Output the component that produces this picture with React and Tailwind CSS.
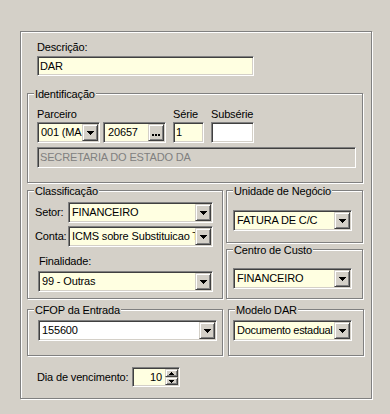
const sunken =
  "border border-t-[#808080] border-l-[#808080] border-r-white border-b-white shadow-[inset_1px_1px_0_#404040,inset_-1px_-1px_0_#d4d0c8] p-px";
const raised =
  "border border-t-[#d4d0c8] border-l-[#d4d0c8] border-r-[#404040] border-b-[#404040] shadow-[inset_1px_1px_0_#fff,inset_-1px_-1px_0_#808080] bg-[#d4d0c8]";
const etched = "border border-[#808080] shadow-[inset_1px_1px_0_#fff,1px_1px_0_#fff]";

const DownArrow = () => (
  <svg width="7" height="4" shapeRendering="crispEdges">
    <rect x="0" y="0" width="7" height="1" />
    <rect x="1" y="1" width="5" height="1" />
    <rect x="2" y="2" width="3" height="1" />
    <rect x="3" y="3" width="1" height="1" />
  </svg>
);

const SpinArrow = ({ up }) => (
  <svg width="5" height="3" shapeRendering="crispEdges">
    {up ? (
      <>
        <rect x="2" y="0" width="1" height="1" />
        <rect x="1" y="1" width="3" height="1" />
        <rect x="0" y="2" width="5" height="1" />
      </>
    ) : (
      <>
        <rect x="0" y="0" width="5" height="1" />
        <rect x="1" y="1" width="3" height="1" />
        <rect x="2" y="2" width="1" height="1" />
      </>
    )}
  </svg>
);

function Group({ title, className, children }) {
  return (
    <div className={`relative ${etched} ${className}`}>
      <span className="absolute -top-[6px] left-[6px] bg-[#d4d0c8] px-px">{title}</span>
      {children}
    </div>
  );
}

function Combo({ value, className = "", bg = "bg-[#ffffe1]", text = "pl-[2px]" }) {
  return (
    <div className={`flex h-[21px] ${sunken} ${bg} ${className}`}>
      <span className={`flex-1 overflow-hidden whitespace-nowrap leading-[17px] ${text}`}>{value}</span>
      <div className={`${raised} w-4 shrink-0 flex items-center justify-center`}>
        <DownArrow />
      </div>
    </div>
  );
}

function Edit({ value, className = "", bg = "bg-[#ffffe1]", text = "text-black pl-px", children }) {
  return (
    <div className={`flex h-[21px] ${sunken} ${bg} ${className}`}>
      <span className={`flex-1 overflow-hidden whitespace-nowrap leading-[17px] ${text}`}>{value}</span>
      {children}
    </div>
  );
}

export default function App() {
  return (
    <div className="w-[390px] h-[414px] bg-[#d4d0c8] pt-[31px] pl-5 font-['Liberation_Sans',Arial,sans-serif] text-[11px] leading-[13px] tracking-[-0.15px] text-black">
      <div className={`${etched} w-[352px] h-[368px] pl-[6px] pt-[9px]`}>
        <div className="ml-[10px]">
          <div>Descrição:</div>
          <Edit className="mt-[2px] w-[217px] !h-[20px]" value="DAR" />
        </div>

        <Group title="Identificação" className="mt-[17px] w-[336px] h-[90px] pl-[9px] pt-[14px]">
          <div className="flex">
            <div>
              <div>Parceiro</div>
              <div className="flex gap-[3px] mt-px">
                <Combo className="w-[63px]" value="001 (MA" />
                <Edit className="w-[63px]" value="20657" text="pl-[3px]">
                  <div className={`${raised} w-4 shrink-0 flex items-end justify-center gap-px pb-[4px]`}>
                    <span className="w-[2px] h-[2px] bg-black" />
                    <span className="w-[2px] h-[2px] bg-black" />
                    <span className="w-[2px] h-[2px] bg-black" />
                  </div>
                </Edit>
              </div>
            </div>
            <div className="ml-[7px]">
              <div>Série</div>
              <Edit className="mt-px w-[31px]" value="1" />
            </div>
            <div className="ml-[7px]">
              <div>Subsérie</div>
              <Edit className="mt-px w-[43px]" bg="bg-white" />
            </div>
          </div>
          <Edit
            className="mt-[4px] w-[319px]"
            bg="bg-[#d4d0c8]"
            text="text-[#808080] pl-px"
            value="SECRETARIA DO ESTADO DA"
          />
        </Group>

        <div className="flex gap-[3px] mt-[7px]">
          <Group title="Classificação" className="w-[196px] h-[109px] pl-[7px] pt-[11px]">
            <div className="flex items-center">
              <span className="w-[33px]">Setor:</span>
              <Combo className="w-[145px]" value="FINANCEIRO" />
            </div>
            <div className="flex items-center mt-[3px]">
              <span className="w-[33px]">Conta:</span>
              <Combo className="w-[145px]" value="ICMS sobre Substituicao T" />
            </div>
            <div className="ml-[3px] mt-[8px]">
              <div className="pl-px">Finalidade:</div>
              <Combo className="mt-[3px] w-[175px]" value="99 - Outras" />
            </div>
          </Group>
          <div className="flex flex-col">
            <Group title="Unidade de Negócio" className="w-[137px] h-[53px] pl-[6px] pt-[19px]">
              <Combo className="w-[119px]" value="FATURA DE C/C" />
            </Group>
            <Group title="Centro de Custo" className="mt-[6px] w-[137px] h-[50px] pl-[6px] pt-[18px]">
              <Combo className="w-[119px]" value="FINANCEIRO" />
            </Group>
          </div>
        </div>

        <div className="flex gap-[5px] mt-[10px]">
          <Group title="CFOP da Entrada" className="w-[196px] h-[47px] pl-[10px] pt-[10px]">
            <Combo className="w-[179px]" bg="bg-white" value="155600" />
          </Group>
          <Group title="Modelo DAR" className="w-[136px] h-[47px] pl-[4px] pt-[10px]">
            <Combo
              className="w-[119px]"
              text="pl-[2px] tracking-[-0.3px]"
              value="Documento estadual"
            />
          </Group>
        </div>

        <div className="flex items-center ml-[10px] mt-[11px]">
          <span className="w-[95px]">Dia de vencimento:</span>
          <div className={`flex w-[48px] h-[20px] ${sunken} bg-[#ffffe1]`}>
            <span className="flex-1 text-right pr-[3px] leading-[16px]">10</span>
            <div className="flex flex-col w-[13px] shrink-0">
              <div className={`${raised} h-[8px] flex items-center justify-center`}>
                <SpinArrow up />
              </div>
              <div className={`${raised} h-[8px] flex items-center justify-center`}>
                <SpinArrow />
              </div>
            </div>
          </div>
        </div>
      </div>
    </div>
  );
}
